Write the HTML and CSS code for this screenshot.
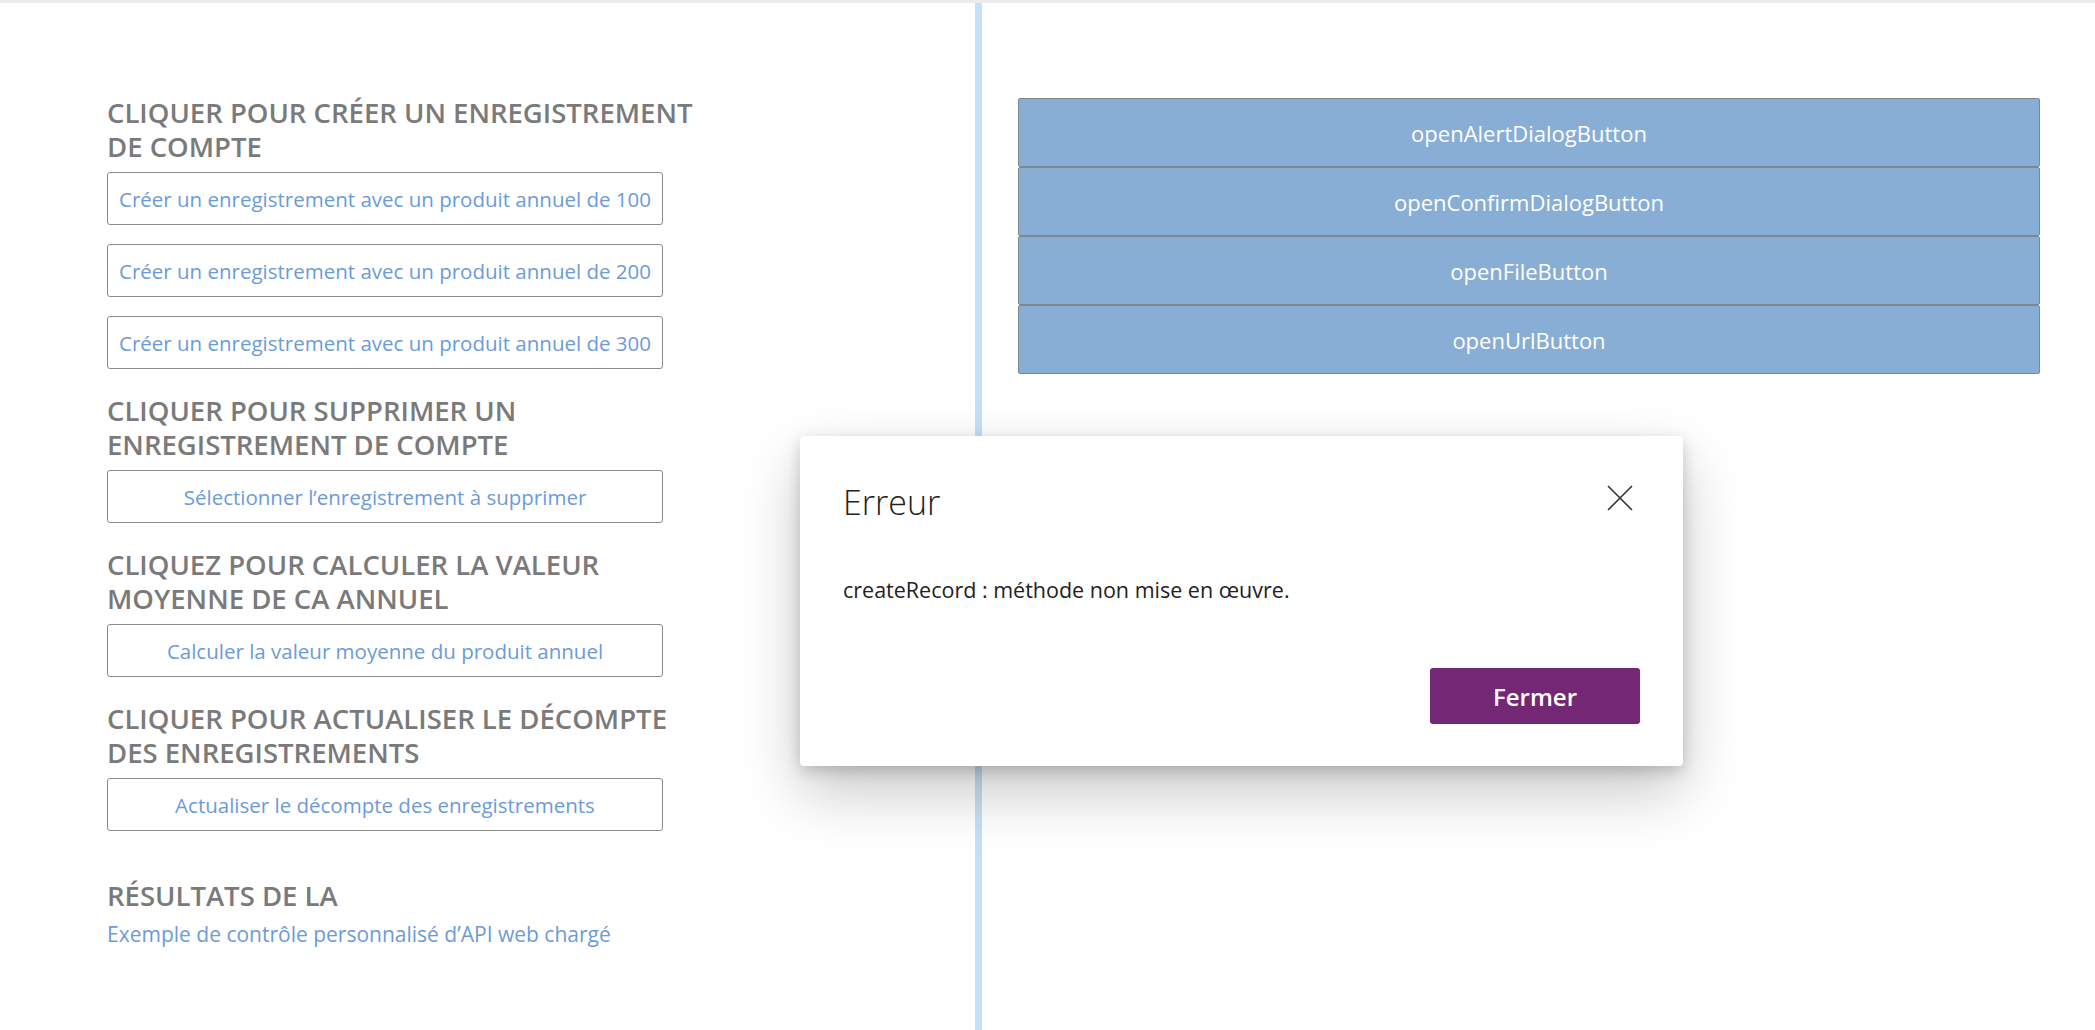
FILE: index.html
```html
<!DOCTYPE html>
<html lang="fr">
<head>
  <meta charset="UTF-8" />
  <meta name="viewport" content="width=device-width, initial-scale=1.0"/>
  <title>Exemple de contrôle personnalisé d'API web</title>
  <link rel="stylesheet" href="styles.css">
</head>
<body>
  <div class="topbar"></div>

  <div class="page">
    <div class="left">
      <h2 class="section-title first">Cliquer pour créer un enregistrement de compte</h2>
      <button class="action">Créer un enregistrement avec un produit annuel de 100</button>
      <button class="action">Créer un enregistrement avec un produit annuel de 200</button>
      <button class="action">Créer un enregistrement avec un produit annuel de 300</button>

      <h2 class="section-title">Cliquer pour supprimer un enregistrement de compte</h2>
      <button class="action">Sélectionner l’enregistrement à supprimer</button>

      <h2 class="section-title">Cliquez pour calculer la valeur moyenne de CA annuel</h2>
      <button class="action">Calculer la valeur moyenne du produit annuel</button>

      <h2 class="section-title">Cliquer pour actualiser le décompte des enregistrements</h2>
      <button class="action">Actualiser le décompte des enregistrements</button>

      <h2 class="section-title results">Résultats de la</h2>
      <div class="result-text">Exemple de contrôle personnalisé d’API web chargé</div>
    </div>

    <div class="divider"></div>

    <div class="right">
      <div class="nav-buttons">
        <button class="nav-btn">openAlertDialogButton</button>
        <button class="nav-btn">openConfirmDialogButton</button>
        <button class="nav-btn">openFileButton</button>
        <button class="nav-btn">openUrlButton</button>
      </div>
    </div>
  </div>

  <div class="dialog">
    <button class="dialog-close" aria-label="Fermer">
      <svg width="26" height="26" viewBox="0 0 26 26">
        <path d="M1 1 L25 25 M25 1 L1 25" stroke="#333" stroke-width="1.6" fill="none"/>
      </svg>
    </button>
    <div class="dialog-title">Erreur</div>
    <div class="dialog-message">createRecord : méthode non mise en œuvre.</div>
    <div class="dialog-footer">
      <button class="primary">Fermer</button>
    </div>
  </div>
</body>
</html>
```

FILE: styles.css
```css
:root {
  --heading: #7a7a7a;
  --link: #6b9bd8;
  --nav-bg: #89aed5;
  --purple: #742774;
}

* {
  box-sizing: border-box;
}

body {
  margin: 0;
  background: #fff;
  font-family: "Open Sans", "Noto Sans", sans-serif;
  height: 100vh;
  overflow: hidden;
}

.topbar {
  height: 3px;
  background: #ebebeb;
}

.page {
  display: flex;
  height: calc(100vh - 3px);
}

.left {
  width: 975px;
  padding: 93px 0 0 107px;
}

.divider {
  width: 7px;
  background: #c7e0f4;
}

.right {
  flex: 1;
  padding: 95px 55px 0 36px;
}

/* left column */

.section-title {
  width: 598px;
  margin: 25px 0 8px;
  font-size: 27.5px;
  line-height: 34px;
  font-weight: 600;
  text-transform: uppercase;
  color: var(--heading);
}

.section-title.first {
  margin-top: 0;
}

.section-title.results {
  margin-top: 48px;
  margin-bottom: 6px;
}

.action {
  display: block;
  width: 556px;
  height: 53px;
  margin-bottom: 19px;
  padding: 0;
  background: #fff;
  border: 1px solid #8a8a8a;
  border-radius: 3px;
  font-family: inherit;
  font-size: 20.5px;
  color: var(--link);
  white-space: nowrap;
  text-align: center;
  cursor: pointer;
}

.action:last-of-type,
.section-title + .action:not(:nth-of-type(-n+3)) {
  margin-bottom: 0;
}

.result-text {
  font-size: 21px;
  line-height: 30px;
  color: var(--link);
}

/* right column */

.nav-buttons {
  display: flex;
  flex-direction: column;
}

.nav-btn {
  height: 69px;
  background: var(--nav-bg);
  border: 1px solid #7e8790;
  border-radius: 2px;
  font-family: inherit;
  font-size: 22px;
  color: #fff;
  cursor: pointer;
}

/* dialog */

.dialog {
  position: absolute;
  left: 800px;
  top: 436px;
  width: 883px;
  height: 330px;
  padding: 44px 43px 42px 43px;
  background: #fff;
  border-radius: 4px;
  box-shadow: 0 26px 60px rgba(0, 0, 0, 0.22), 0 5px 15px rgba(0, 0, 0, 0.18);
}

.dialog-close {
  position: absolute;
  top: 49px;
  right: 50px;
  width: 26px;
  height: 26px;
  padding: 0;
  border: none;
  background: none;
  cursor: pointer;
}

.dialog-close svg {
  display: block;
}

.dialog-title {
  font-size: 34px;
  line-height: 44px;
  font-weight: 300;
  color: #222;
}

.dialog-message {
  margin-top: 51px;
  font-size: 21.5px;
  line-height: 30px;
  color: #222;
}

.dialog-footer {
  display: flex;
  justify-content: flex-end;
  margin-top: 63px;
}

.primary {
  width: 210px;
  height: 56px;
  background: var(--purple);
  border: none;
  border-radius: 3px;
  font-family: inherit;
  font-size: 24px;
  font-weight: 600;
  color: #fff;
  cursor: pointer;
}
```
